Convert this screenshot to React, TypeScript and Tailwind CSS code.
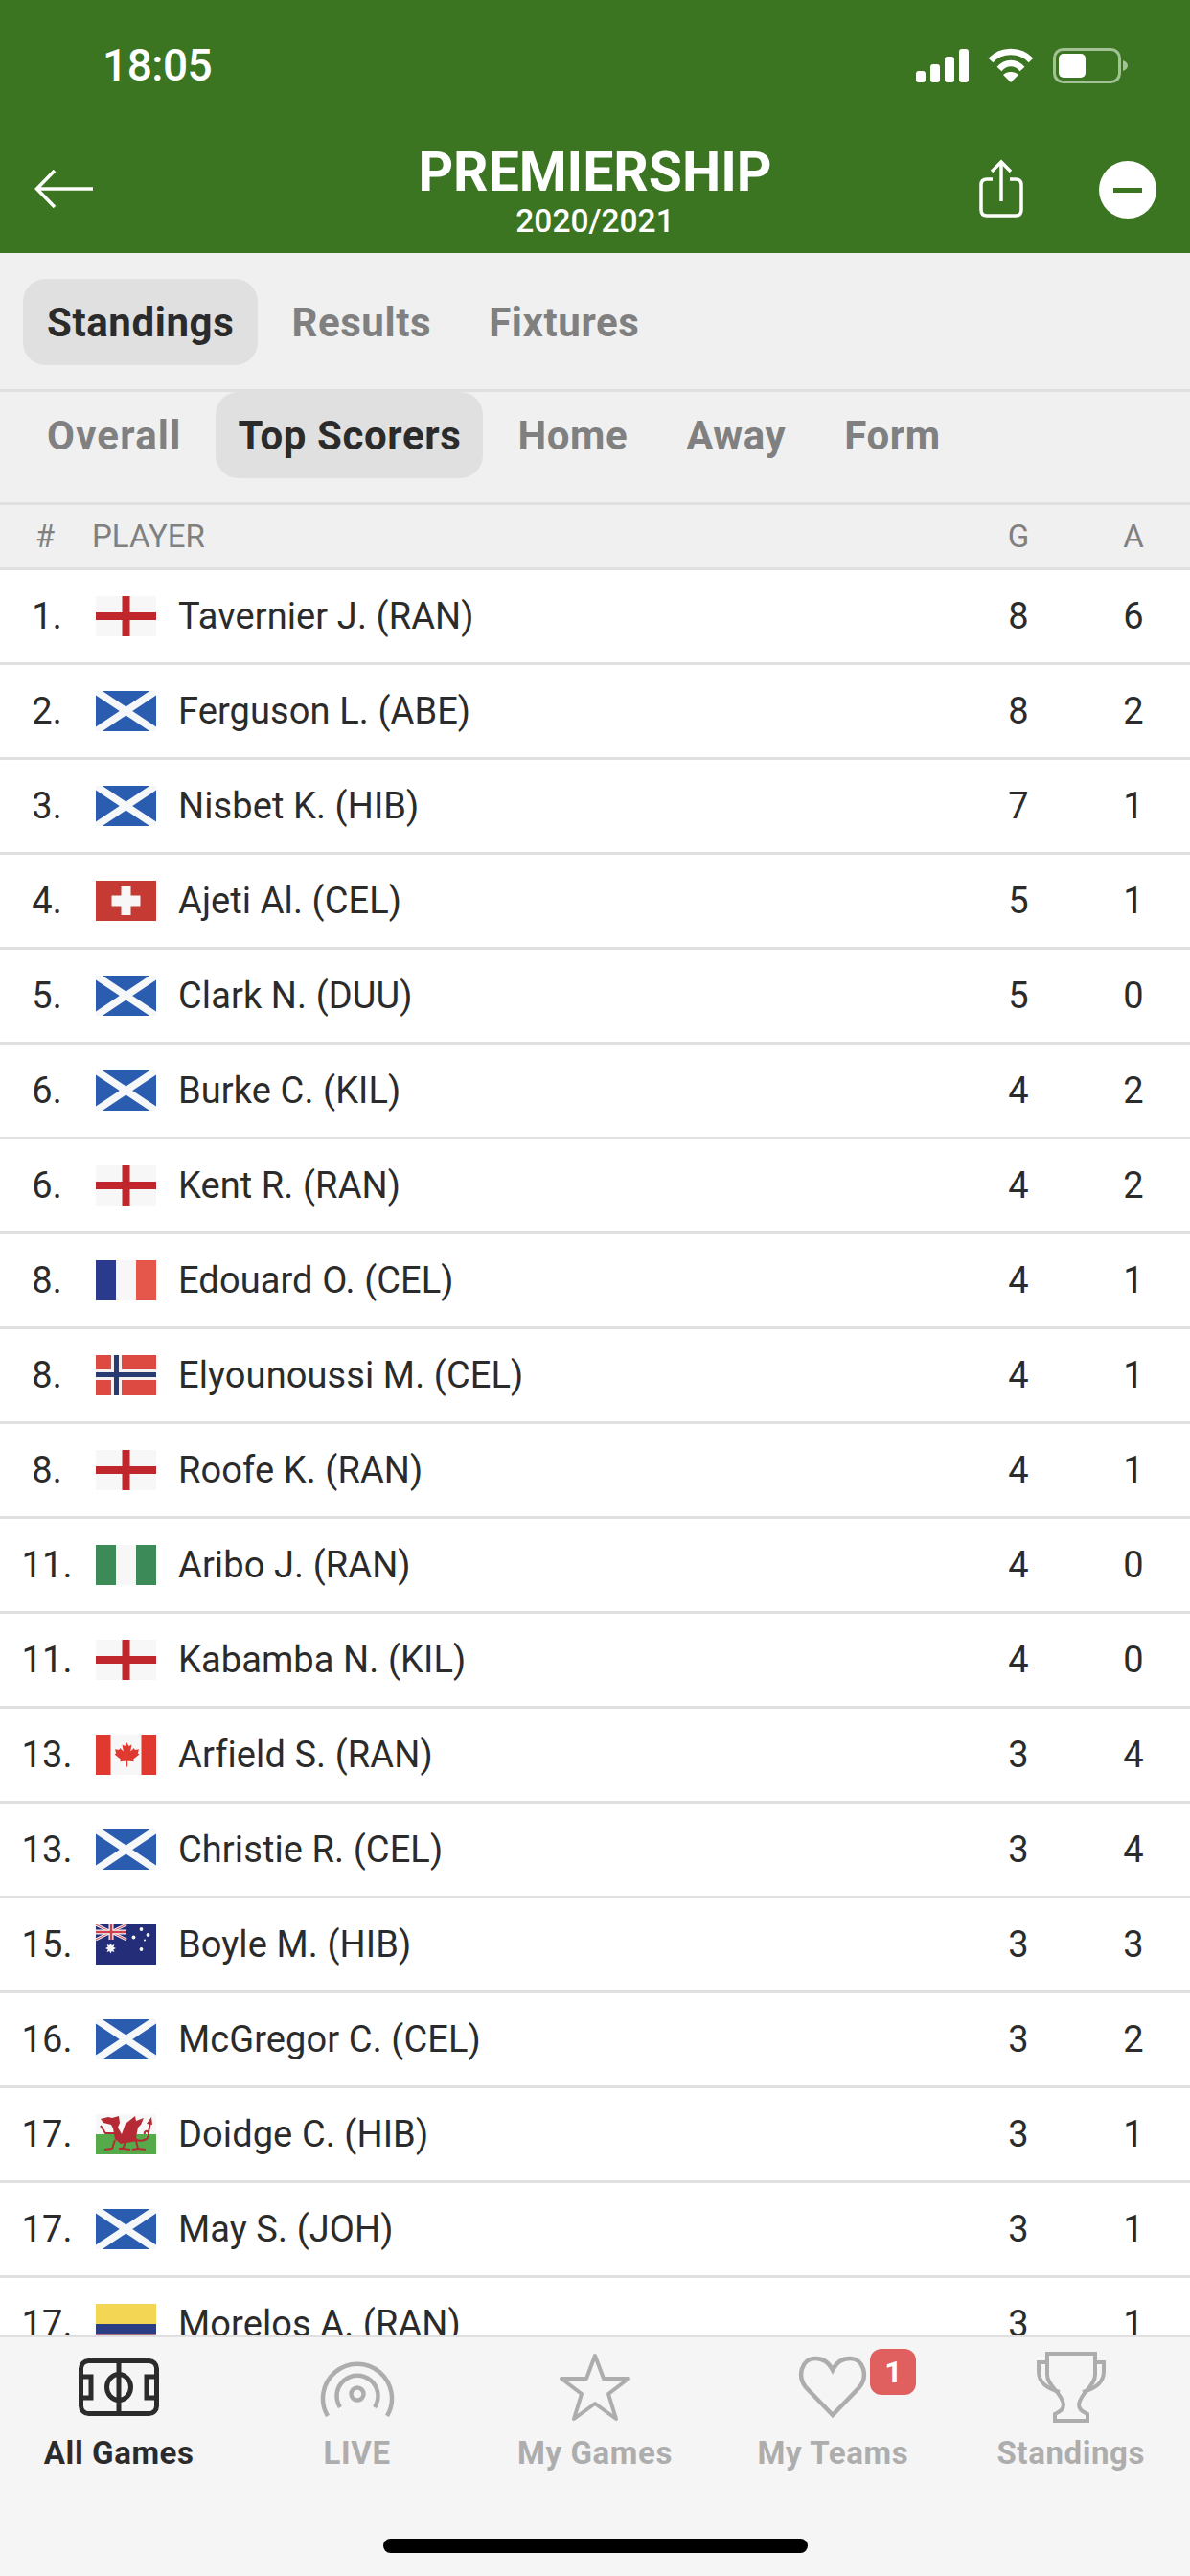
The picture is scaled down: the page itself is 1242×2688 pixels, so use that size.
const FONT = "font-['Roboto',sans-serif]";

type FlagCode = 'eng' | 'sco' | 'sui' | 'fra' | 'nor' | 'nga' | 'can' | 'aus' | 'wal' | 'col';

const players: { rank: string; flag: FlagCode; name: string; g: number; a: number }[] = [
  { rank: '1.', flag: 'eng', name: 'Tavernier J. (RAN)', g: 8, a: 6 },
  { rank: '2.', flag: 'sco', name: 'Ferguson L. (ABE)', g: 8, a: 2 },
  { rank: '3.', flag: 'sco', name: 'Nisbet K. (HIB)', g: 7, a: 1 },
  { rank: '4.', flag: 'sui', name: 'Ajeti Al. (CEL)', g: 5, a: 1 },
  { rank: '5.', flag: 'sco', name: 'Clark N. (DUU)', g: 5, a: 0 },
  { rank: '6.', flag: 'sco', name: 'Burke C. (KIL)', g: 4, a: 2 },
  { rank: '6.', flag: 'eng', name: 'Kent R. (RAN)', g: 4, a: 2 },
  { rank: '8.', flag: 'fra', name: 'Edouard O. (CEL)', g: 4, a: 1 },
  { rank: '8.', flag: 'nor', name: 'Elyounoussi M. (CEL)', g: 4, a: 1 },
  { rank: '8.', flag: 'eng', name: 'Roofe K. (RAN)', g: 4, a: 1 },
  { rank: '11.', flag: 'nga', name: 'Aribo J. (RAN)', g: 4, a: 0 },
  { rank: '11.', flag: 'eng', name: 'Kabamba N. (KIL)', g: 4, a: 0 },
  { rank: '13.', flag: 'can', name: 'Arfield S. (RAN)', g: 3, a: 4 },
  { rank: '13.', flag: 'sco', name: 'Christie R. (CEL)', g: 3, a: 4 },
  { rank: '15.', flag: 'aus', name: 'Boyle M. (HIB)', g: 3, a: 3 },
  { rank: '16.', flag: 'sco', name: 'McGregor C. (CEL)', g: 3, a: 2 },
  { rank: '17.', flag: 'wal', name: 'Doidge C. (HIB)', g: 3, a: 1 },
  { rank: '17.', flag: 'sco', name: 'May S. (JOH)', g: 3, a: 1 },
  { rank: '17.', flag: 'col', name: 'Morelos A. (RAN)', g: 3, a: 1 },
];

function Flag({ code }: { code: FlagCode }) {
  return (
    <svg viewBox="0 0 63 42" className="w-[63px] h-[42px] shrink-0">
      {code === 'eng' && (
        <>
          <rect width="63" height="42" fill="#f7f7f7" />
          <rect y="17" width="63" height="8" fill="#c0272d" />
          <rect x="27.5" width="8" height="42" fill="#c0272d" />
        </>
      )}
      {code === 'sco' && (
        <>
          <rect width="63" height="42" fill="#2a5db0" />
          <path d="M0 0L63 42M63 0L0 42" stroke="#f6f7f8" strokeWidth="7.5" />
        </>
      )}
      {code === 'sui' && (
        <>
          <rect width="63" height="42" fill="#c53a33" />
          <rect x="16.5" y="15.5" width="30" height="11" fill="#f7f7f7" />
          <rect x="26.5" y="6" width="10" height="30" fill="#f7f7f7" />
        </>
      )}
      {code === 'fra' && (
        <>
          <rect width="21" height="42" fill="#2b3a8c" />
          <rect x="21" width="21" height="42" fill="#f7f7f7" />
          <rect x="42" width="21" height="42" fill="#e4574a" />
        </>
      )}
      {code === 'nor' && (
        <>
          <rect width="63" height="42" fill="#dd4a41" />
          <rect y="15" width="63" height="11" fill="#f7f0f0" />
          <rect x="16" width="11" height="42" fill="#f7f0f0" />
          <rect y="18" width="63" height="5" fill="#283a72" />
          <rect x="19" width="5" height="42" fill="#283a72" />
        </>
      )}
      {code === 'nga' && (
        <>
          <rect width="21" height="42" fill="#3b8a58" />
          <rect x="21" width="21" height="42" fill="#f7f7f7" />
          <rect x="42" width="21" height="42" fill="#3b8a58" />
        </>
      )}
      {code === 'can' && (
        <>
          <rect width="63" height="42" fill="#f7f7f7" />
          <rect width="15.5" height="42" fill="#e03a30" />
          <rect x="47.5" width="15.5" height="42" fill="#e03a30" />
          <path
            d="M31.5 7l3 5 3-1.5-1.3 7 3.6-3.5 1 2 4.2-.7-1.2 4.3 1.7 1-6.5 5.2.7 2.4-6.5-.8v6h-1.4v-6l-6.5.8.7-2.4-6.5-5.2 1.7-1-1.2-4.3 4.2.7 1-2 3.6 3.5-1.3-7 3 1.5z"
            fill="#e03a30"
          />
        </>
      )}
      {code === 'aus' && (
        <>
          <rect width="63" height="42" fill="#232d78" />
          <path d="M0 0L32 16M32 0L0 16" stroke="#f4f4f6" strokeWidth="3" />
          <path d="M0 0L32 16M32 0L0 16" stroke="#d1404a" strokeWidth="1" />
          <rect y="5.5" width="32" height="5" fill="#f4f4f6" />
          <rect x="13.5" width="5" height="16" fill="#f4f4f6" />
          <rect y="6.8" width="32" height="2.4" fill="#d1404a" />
          <rect x="14.8" width="2.4" height="16" fill="#d1404a" />
          <path d="M15.5 19.5l1.2 2.6 2.7-1-1 2.7 2.6 1.2-2.6 1.2 1 2.7-2.7-1-1.2 2.6-1.2-2.6-2.7 1 1-2.7-2.6-1.2 2.6-1.2-1-2.7 2.7 1z" fill="#f4f4f6" />
          <circle cx="47.5" cy="5" r="1.9" fill="#f4f4f6" />
          <circle cx="39.5" cy="13.5" r="1.9" fill="#f4f4f6" />
          <circle cx="54.5" cy="11" r="1.9" fill="#f4f4f6" />
          <circle cx="51" cy="16.5" r="1.1" fill="#f4f4f6" />
          <circle cx="47.5" cy="26" r="1.9" fill="#f4f4f6" />
        </>
      )}
      {code === 'wal' && (
        <>
          <rect width="63" height="21" fill="#f7f7f7" />
          <rect y="21" width="63" height="21" fill="#55ab4a" />
          <g fill="#b52a35">
            <path d="M5 5L13 3L17 4L24 2L25 9L23 14L27 21L40 20L44 28L26 31L20 26L18 15L16 11L8 9Z" />
            <path d="M27 21L31 10L41 2L42 7L50 4L47 11L44 14L42 24Z" />
          </g>
          <g fill="none" stroke="#b52a35" strokeWidth="2" strokeLinejoin="round">
            <path d="M19 20L10 20L7 15L5 12" />
            <path d="M20 27L17 36L9 37" />
            <path d="M31 30L28 36L24 36M28 36L36 37" />
            <path d="M42 28L44 36L38 37M44 36L52 37" />
            <path d="M42 27C50 29 56 26 55 20C54 16 50 18 51 21" />
            <path d="M55 19L57 8" />
          </g>
          <path d="M53 10L58 3L59 11Z" fill="#b52a35" />
        </>
      )}
      {code === 'col' && (
        <>
          <rect width="63" height="21" fill="#f3d653" />
          <rect y="21" width="63" height="10.5" fill="#2a3d85" />
          <rect y="31.5" width="63" height="10.5" fill="#c53a3a" />
        </>
      )}
    </svg>
  );
}

function TabPill({ label, active, className = 'px-[25px] tracking-[0.6px]' }: { label: string; active?: boolean; className?: string }) {
  return (
    <div
      className={`h-[90px] rounded-[24px] flex items-center text-[42px] font-bold ${className} ${
        active ? 'bg-[#e0e0e0] text-[#2b2b2b]' : 'text-[#808080]'
      }`}
    >
      {label}
    </div>
  );
}

function PitchIcon() {
  return (
    <svg viewBox="0 0 84 60" className="w-[84px] h-[60px]" fill="none" stroke="#2b2b2b" strokeWidth="5">
      <rect x="2.5" y="2.5" width="79" height="55" rx="8" />
      <path d="M42 2.5V57.5" />
      <ellipse cx="42" cy="30" rx="12.5" ry="13.5" />
      <path d="M2.5 19H13V41H2.5M81.5 19H71V41H81.5" />
    </svg>
  );
}

function LiveIcon() {
  return (
    <svg viewBox="0 0 78 62" className="w-[78px] h-[62px]" fill="none" stroke="#adadad" strokeWidth="4.5">
      <path d="M8 61A36 36 0 1 1 70 61" />
      <path d="M21 52A21.5 21.5 0 1 1 57 52" />
      <circle cx="39" cy="38" r="6.5" />
    </svg>
  );
}

function StarIcon() {
  return (
    <svg viewBox="0 0 76 72" className="w-[76px] h-[72px]" fill="none" stroke="#adadad" strokeWidth="4" strokeLinejoin="round">
      <path d="M38 3L47 27H73L52 43L60 69L38 53L16 69L24 43L3 27H29Z" />
    </svg>
  );
}

function HeartIcon() {
  return (
    <svg viewBox="0 0 72 66" className="w-[72px] h-[66px]" fill="none" stroke="#adadad" strokeWidth="4.5">
      <path d="M36 62L8 33C-1 22 3 3 18 3C26 3 32 7 36 15C40 7 46 3 54 3C69 3 73 22 64 33Z" />
    </svg>
  );
}

function TrophyIcon() {
  return (
    <svg viewBox="0 0 72 74" className="w-[72px] h-[74px]" fill="none" stroke="#adadad" strokeWidth="4">
      <path d="M11 2H61V24C61 36 46 42 44 55C44 60 47 62 53 65V72H19V65C25 62 28 60 28 55C26 42 11 36 11 24Z" />
      <path d="M11 11H2V20C2 32 10 38 24 42M61 11H70V20C70 32 62 38 48 42" />
    </svg>
  );
}

function NavItem({ label, icon, active }: { label: string; icon: React.ReactNode; active?: boolean }) {
  return (
    <div className="flex flex-col items-center">
      <div className="h-[92px] flex items-center justify-center relative">{icon}</div>
      <div className={`mt-[3px] text-[33px] leading-[40px] font-bold tracking-[0.6px] ${active ? 'text-[#2b2b2b]' : 'text-[#adadad]'}`}>
        {label}
      </div>
    </div>
  );
}

export default function App() {
  return (
    <div className={`w-[1242px] h-[2688px] flex flex-col overflow-hidden bg-[#f0f0f0] ${FONT}`}>
      <header className="h-[264px] shrink-0 bg-[#3c7522] text-white flex flex-col">
        <div className="h-[135px] pt-[42px] pl-[107px] pr-[65px] flex items-start justify-between">
          <span className="text-[46px] leading-[52px] font-medium tracking-[-0.5px]">18:05</span>
          <div className="flex items-center gap-[20px] h-[52px]">
            <svg viewBox="0 0 55 35" className="w-[55px] h-[35px]" fill="#fff">
              <rect y="23" width="10" height="12" rx="3" />
              <rect x="15" y="16" width="10" height="19" rx="3" />
              <rect x="30" y="8" width="10" height="27" rx="3" />
              <rect x="45" width="10" height="35" rx="3" />
            </svg>
            <svg viewBox="0 0 48 36" className="w-[48px] h-[36px]" fill="none" stroke="#fff" strokeWidth="6.5">
              <path d="M3 13C14 1 34 1 45 13" />
              <path d="M12 22C19 14 29 14 36 22" />
              <path d="M24 36L16 28C20 24 28 24 32 28Z" fill="#fff" stroke="none" />
            </svg>
            <svg viewBox="0 0 78 37" className="w-[78px] h-[37px]">
              <rect x="1.5" y="1.5" width="68" height="34" rx="9" fill="none" stroke="#a3c295" strokeWidth="3" />
              <rect x="6" y="6" width="28" height="25" rx="5" fill="#fff" />
              <path d="M73 13C76 14 78 16 78 18.5C78 21 76 23 73 24Z" fill="#a3c295" />
            </svg>
          </div>
        </div>
        <div className="flex-1 flex items-start justify-between">
          <div className="w-[260px] pl-[36px] pt-[42px]">
            <svg viewBox="0 0 62 40" className="w-[62px] h-[40px]" fill="none" stroke="#fff" strokeWidth="3.5">
              <path d="M61 20H3M21 1L2.5 20L21 39" />
            </svg>
          </div>
          <div className="flex flex-col items-center pt-[13px]">
            <div className="text-[57px] leading-[64px] font-bold">PREMIERSHIP</div>
            <div className="text-[33.5px] leading-[36px] font-medium mt-[1px]">2020/2021</div>
          </div>
          <div className="w-[260px] pt-[31px] pl-[40px] flex items-start">
            <svg viewBox="0 0 46 61" className="w-[46px] h-[61px]" fill="none" stroke="#fff" strokeWidth="3.5">
              <path d="M14 21H8C4 21 2 23 2 27V53C2 57 4 59 8 59H38C42 59 44 57 44 53V27C44 23 42 21 38 21H32" />
              <path d="M23 44V3M13 13L23 3L33 13" />
            </svg>
            <div className="ml-[79px] mt-[2px] w-[60px] h-[60px] rounded-full bg-white flex items-center justify-center">
              <div className="w-[30px] h-[5px] bg-[#3c7522]" />
            </div>
          </div>
        </div>
      </header>

      <div className="h-[145px] shrink-0 border-b-[3px] border-[#e0e0e0] pt-[27px] pl-[24px] flex items-start gap-[10px]">
        <TabPill label="Standings" active />
        <TabPill label="Results" />
        <TabPill label="Fixtures" />
      </div>
      <div className="h-[118px] shrink-0 border-b-[3px] border-[#e0e0e0] pl-[24px] flex items-start gap-[11px]">
        <TabPill label="Overall" className="px-[25px] tracking-[1.2px]" />
        <TabPill label="Top Scorers" active className="px-[23px] tracking-[0.6px]" />
        <TabPill label="Home" />
        <TabPill label="Away" />
        <TabPill label="Form" />
      </div>

      <div className="h-[68px] shrink-0 border-b-[3px] border-[#e0e0e0] flex items-center text-[33px] text-[#808080]">
        <div className="w-[96px] text-center pr-[2px]">#</div>
        <div className="flex-1">PLAYER</div>
        <div className="w-[60px] text-center mr-[60px]">G</div>
        <div className="w-[60px] text-center mr-[29px]">A</div>
      </div>

      <div className="flex-1 min-h-0 overflow-hidden bg-white">
        {players.map((p, i) => (
          <div key={i} className="h-[99px] border-b-[3px] border-[#e0e0e0] flex items-center text-[38px] tracking-[0.1px] text-[#2b2b2b]">
            <div className="w-[98px] text-center pt-[1px]">{p.rank}</div>
            <div className="ml-[2px] mr-[23px]">
              <Flag code={p.flag} />
            </div>
            <div className="flex-1 pt-[1px]">{p.name}</div>
            <div className="w-[60px] text-center mr-[60px] pt-[1px]">{p.g}</div>
            <div className="w-[60px] text-center mr-[29px] pt-[1px]">{p.a}</div>
          </div>
        ))}
      </div>

      <nav className="h-[252px] shrink-0 border-t-[3px] border-[#e0e0e0] bg-[#f5f5f5] flex flex-col">
        <div className="grid grid-cols-5 pt-[6px]">
          <NavItem label="All Games" icon={<PitchIcon />} active />
          <NavItem label="LIVE" icon={<LiveIcon />} />
          <NavItem label="My Games" icon={<StarIcon />} />
          <NavItem
            label="My Teams"
            icon={
              <>
                <HeartIcon />
                <div className="absolute left-[75px] top-[6px] w-[48px] h-[48px] rounded-[12px] bg-[#e06060] text-white text-[32px] font-bold flex items-center justify-center">
                  1
                </div>
              </>
            }
          />
          <NavItem label="Standings" icon={<TrophyIcon />} />
        </div>
        <div className="mt-[69px] mx-auto w-[443px] h-[15px] rounded-full bg-black" />
      </nav>
    </div>
  );
}
